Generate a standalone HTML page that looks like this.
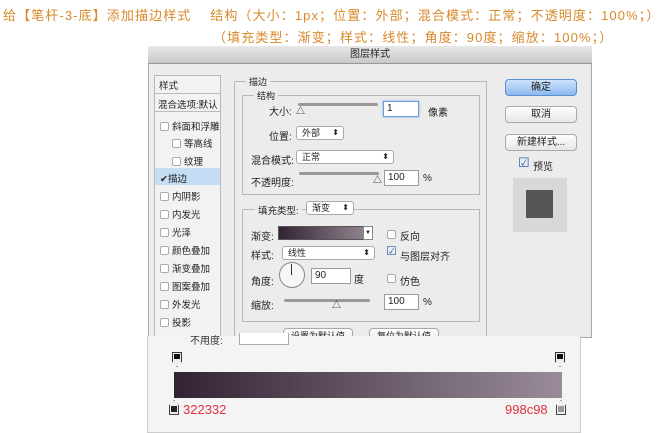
<!DOCTYPE html>
<html><head><meta charset="utf-8"><style>
*{margin:0;padding:0;box-sizing:border-box}
body{width:661px;height:433px;background:#fff;position:relative;overflow:hidden;font-family:"Liberation Sans","Noto Sans CJK SC",sans-serif;font-size:10px;color:#222}
.a{position:absolute;white-space:nowrap}
.or{color:#d8892a;font-size:13px;letter-spacing:1.1px}
.dlg{position:absolute;left:148px;top:46px;width:444px;height:292px;background:#ececec;border:1px solid #aaa}
.title{position:absolute;left:148px;top:46px;width:444px;height:18px;background:linear-gradient(#e8e8e8,#c9c9c9);border-bottom:1px solid #999;text-align:center;font-size:10px;line-height:18px}
.box{position:absolute;border:1px solid #b8b8b8}
.btn{position:absolute;background:linear-gradient(#fff,#e6e6e6);border:1px solid #a9a9a9;border-radius:4px;text-align:center;font-size:10px;line-height:15px}
.sel{position:absolute;background:#fff;border:1px solid #a9a9a9;border-radius:3px;font-size:9px;line-height:12px;padding-left:5px}
.sel:after{content:"⬍";position:absolute;right:4px;top:0;font-size:8px}
.inp{position:absolute;background:#fff;border:1px solid #999;font-size:10px;line-height:14px;padding-left:3px}
.cb{position:absolute;width:9px;height:9px;border:1px solid #aaa;background:#fff;border-radius:2px}
.li{position:absolute;left:160px;font-size:9.5px}
.li .cb{position:static;display:inline-block;vertical-align:-1px;margin-right:3px}
.sl{position:absolute;height:3px;background:#999;border-radius:2px}
</style></head><body>
<div class="a or" style="left:3px;top:5px">给【笔杆-3-底】添加描边样式&nbsp;&nbsp;&nbsp;&nbsp;结构（大小：1px；位置：外部；混合模式：正常；不透明度：100%；）</div>
<div class="a or" style="left:213px;top:27px">（填充类型：渐变；样式：线性；角度：90度；缩放：100%；）</div>

<div class="dlg"></div>
<div class="title">图层样式</div>

<div class="box" style="left:154px;top:75px;width:67px;height:262px;background:#f2f2f2"></div>
<div class="a" style="left:159px;top:78px;font-size:9.5px">样式</div>
<div class="a" style="left:154px;top:93px;width:67px;border-top:1px solid #bbb"></div>
<div class="a" style="left:158px;top:97px;font-size:9.5px">混合选项:默认</div>
<div class="a" style="left:154px;top:111px;width:67px;border-top:1px solid #bbb"></div>
<div class="li" style="top:119px"><span class="cb"></span>斜面和浮雕</div>
<div class="li" style="top:136px;left:172px"><span class="cb"></span>等高线</div>
<div class="li" style="top:154px;left:172px"><span class="cb"></span>纹理</div>
<div class="a" style="left:155px;top:168px;width:65px;height:17px;background:#c5dcf5"></div>
<div class="li" style="top:171px">✔描边</div>
<div class="li" style="top:189px"><span class="cb"></span>内阴影</div>
<div class="li" style="top:207px"><span class="cb"></span>内发光</div>
<div class="li" style="top:225px"><span class="cb"></span>光泽</div>
<div class="li" style="top:243px"><span class="cb"></span>颜色叠加</div>
<div class="li" style="top:261px"><span class="cb"></span>渐变叠加</div>
<div class="li" style="top:279px"><span class="cb"></span>图案叠加</div>
<div class="li" style="top:297px"><span class="cb"></span>外发光</div>
<div class="li" style="top:315px"><span class="cb"></span>投影</div>

<div class="box" style="left:234px;top:81px;width:253px;height:260px"></div>
<div class="a" style="left:246px;top:75px;background:#ececec;padding:0 3px;font-size:9px">描边</div>
<div class="box" style="left:242px;top:95px;width:238px;height:100px"></div>
<div class="a" style="left:254px;top:89px;background:#ececec;padding:0 3px;font-size:9px">结构</div>
<div class="a" style="left:269px;top:103px">大小:</div>
<div class="sl" style="left:298px;top:103px;width:80px"></div>
<div class="a" style="left:296px;top:104px;font-size:9px">△</div>
<div class="inp" style="left:383px;top:101px;width:36px;height:16px;border-color:#6a9fdc;box-shadow:0 0 2px #6a9fdc">1</div>
<div class="a" style="left:428px;top:104px">像素</div>
<div class="a" style="left:269px;top:128px">位置:</div>
<div class="sel" style="left:296px;top:126px;width:48px;height:14px">外部</div>
<div class="a" style="left:251px;top:152px">混合模式:</div>
<div class="sel" style="left:296px;top:150px;width:98px;height:14px">正常</div>
<div class="a" style="left:251px;top:174px">不透明度:</div>
<div class="sl" style="left:299px;top:172px;width:80px"></div>
<div class="a" style="left:373px;top:173px;font-size:9px">△</div>
<div class="inp" style="left:384px;top:170px;width:35px;height:16px">100</div>
<div class="a" style="left:423px;top:173px">%</div>

<div class="box" style="left:242px;top:209px;width:238px;height:113px"></div>
<div class="a" style="left:255px;top:203px;background:#ececec;padding:0 3px;font-size:9.5px">填充类型:</div>
<div class="sel" style="left:306px;top:201px;width:48px;height:14px">渐变</div>
<div class="a" style="left:251px;top:228px">渐变:</div>
<div class="a" style="left:278px;top:226px;width:95px;height:14px;border:1px solid #555;background:linear-gradient(90deg,#322332,#998c98)"></div>
<div class="a" style="left:363px;top:226px;width:10px;height:14px;background:#fff;border:1px solid #888;font-size:6px;text-align:center;line-height:12px">▼</div>
<div class="cb" style="left:387px;top:230px"></div>
<div class="a" style="left:400px;top:228px">反向</div>
<div class="a" style="left:251px;top:247px">样式:</div>
<div class="sel" style="left:282px;top:246px;width:93px;height:14px">线性</div>
<div class="a" style="left:386px;top:244px;color:#2a5fb0;font-size:12px">☑</div>
<div class="a" style="left:400px;top:248px">与图层对齐</div>
<div class="a" style="left:251px;top:273px">角度:</div>
<div class="a" style="left:279px;top:262px;width:26px;height:26px;border:1px solid #888;border-radius:50%;background:#f6f6f6"></div>
<div class="a" style="left:291px;top:264px;width:1px;height:11px;background:#333"></div>
<div class="inp" style="left:311px;top:268px;width:40px;height:16px">90</div>
<div class="a" style="left:354px;top:271px">度</div>
<div class="cb" style="left:387px;top:274px"></div>
<div class="a" style="left:400px;top:273px">仿色</div>
<div class="a" style="left:251px;top:297px">缩放:</div>
<div class="sl" style="left:284px;top:299px;width:86px"></div>
<div class="a" style="left:332px;top:298px;font-size:9px">△</div>
<div class="inp" style="left:384px;top:294px;width:35px;height:16px">100</div>
<div class="a" style="left:423px;top:297px">%</div>
<div class="btn" style="left:283px;top:328px;width:70px;height:14px;font-size:9px">设置为默认值</div>
<div class="btn" style="left:369px;top:328px;width:70px;height:14px;font-size:9px">复位为默认值</div>

<div class="btn" style="left:505px;top:79px;width:72px;height:17px;background:linear-gradient(#cfe3fb,#8cb9ef);border-color:#5c8fd0">确定</div>
<div class="btn" style="left:505px;top:106px;width:72px;height:17px">取消</div>
<div class="btn" style="left:505px;top:134px;width:72px;height:17px">新建样式...</div>
<div class="a" style="left:518px;top:155px;color:#2a5fb0;font-size:13px">☑</div>
<div class="a" style="left:533px;top:158px;font-size:10px">预览</div>
<div class="a" style="left:513px;top:178px;width:54px;height:54px;background:#d8d8d8"></div>
<div class="a" style="left:526px;top:190px;width:27px;height:28px;background:#555"></div>

<div class="a" style="left:147px;top:336px;width:434px;height:97px;background:#f4f4f4;border:1px solid #ccc;border-top:none"></div>
<div class="a" style="left:190px;top:332px;font-size:10px;color:#333">不用度:</div>
<div class="a" style="left:239px;top:333px;width:50px;height:12px;border:1px solid #aaa;border-top:none;background:#fff"></div>
<div class="a" style="left:172px;top:352px;width:10px;height:15px;background:#eee;border:1px solid #333;clip-path:polygon(0 0,100% 0,100% 65%,50% 100%,0 65%)"></div>
<div class="a" style="left:174px;top:354px;width:6px;height:5px;background:#111"></div>
<div class="a" style="left:555px;top:352px;width:10px;height:15px;background:#eee;border:1px solid #333;clip-path:polygon(0 0,100% 0,100% 65%,50% 100%,0 65%)"></div>
<div class="a" style="left:557px;top:354px;width:6px;height:5px;background:#111"></div>
<div class="a" style="left:174px;top:372px;width:388px;height:26px;background:linear-gradient(90deg,#322332,#998c98)"></div>
<div class="a" style="left:169px;top:400px;width:10px;height:15px;background:#eee;border:1px solid #444;clip-path:polygon(50% 0,100% 35%,100% 100%,0 100%,0 35%)"></div>
<div class="a" style="left:171px;top:406px;width:6px;height:6px;background:#222"></div>
<div class="a" style="left:556px;top:400px;width:10px;height:15px;background:#eee;border:1px solid #444;clip-path:polygon(50% 0,100% 35%,100% 100%,0 100%,0 35%)"></div>
<div class="a" style="left:558px;top:406px;width:6px;height:6px;background:#999"></div>
<div class="a" style="left:183px;top:402px;color:#e0303e;font-size:13px">322332</div>
<div class="a" style="left:505px;top:402px;color:#e0303e;font-size:13px">998c98</div>
</body></html>
